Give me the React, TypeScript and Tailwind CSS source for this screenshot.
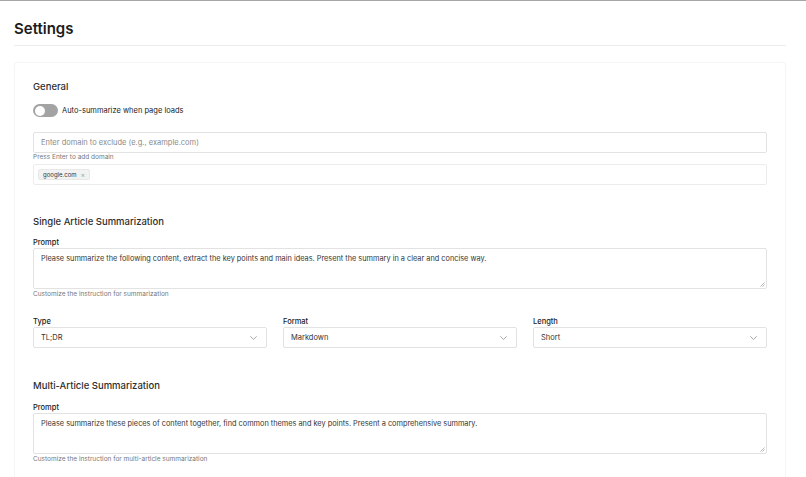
import React from "react";

function Chevron() {
  return (
    <svg width="7" height="4" viewBox="0 0 7 4" fill="none" className="shrink-0">
      <path d="M0.6 0.6 L3.5 3.4 L6.4 0.6" stroke="#8f8f8f" strokeWidth="0.8" strokeLinecap="round" strokeLinejoin="round" />
    </svg>
  );
}

function Select({ label, value }: { label: string; value: string }) {
  return (
    <div className="flex flex-col">
      <div className="h-[10px] text-[7.5px] leading-[10px] text-[#222] font-medium">{label}</div>
      <div className="h-[21px] border border-[#e2e2e2] rounded-[2px] bg-white flex items-center justify-between pl-[7px] pr-[9px]">
        <span className="text-[7.5px] text-[#333]">{value}</span>
        <Chevron />
      </div>
    </div>
  );
}

function Resize() {
  return (
    <svg width="5" height="5" viewBox="0 0 5 5" className="absolute right-[1px] bottom-[1px]">
      <path d="M4.5 0.5 L0.5 4.5 M4.5 2.5 L2.5 4.5" stroke="#9a9a9a" strokeWidth="0.7" />
    </svg>
  );
}

function Textarea({ text }: { text: string }) {
  return (
    <div className="relative h-[41px] border border-[#e2e2e2] rounded-[2px] bg-white pl-[7px] pr-[7px] pt-[5px]">
      <div className="text-[7.35px] leading-[10px] text-[#333]">{text}</div>
      <Resize />
    </div>
  );
}

export default function App() {
  return (
    <div
      className="w-[806px] h-[477px] overflow-hidden bg-white border-t border-[#a6a6a6]"
      style={{ fontFamily: 'Inter, "Liberation Sans", Arial, sans-serif' }}
    >
      <div className="pl-[14px] pr-[20px]">
        <div className="pt-[19px] pb-[7px] border-b border-[#ececec]">
          <h1 className="text-[15px] leading-[18px] font-semibold text-[#1c1c1c]">Settings</h1>
        </div>

        <div className="mt-[16px] border border-[#f5f5f5] rounded-[3px] px-[18px] pt-[17px] pb-[20px]">
          {/* General */}
          <h2 className="text-[9.5px] leading-[14px] font-medium text-[#2e2e2e]">General</h2>
          <div className="mt-[10px] flex items-center gap-[4px] h-[13px]">
            <div className="w-[25px] h-[13px] rounded-full bg-[#a3a3a3] flex items-center pl-[1.5px]">
              <div className="w-[10px] h-[10px] rounded-full bg-white" />
            </div>
            <span className="text-[7.5px] text-[#222]">Auto-summarize when page loads</span>
          </div>
          <div className="mt-[15px] h-[21px] border border-[#e2e2e2] rounded-[2px] bg-white flex items-center pl-[7px]">
            <span className="text-[7.5px] text-[#8a8a8a]">Enter domain to exclude (e.g., example.com)</span>
          </div>
          <div className="text-[6.5px] leading-[9px] text-[#777]">Press Enter to add domain</div>
          <div className="mt-[2px] h-[21px] border border-[#ececec] rounded-[2px] bg-white flex items-center pl-[4px]">
            <div className="h-[11px] flex items-center gap-[4px] bg-[#f2f2f2] border border-[#e8e8e8] rounded-[2px] px-[4px]">
              <span className="text-[6px] text-[#333]">google.com</span>
              <span className="text-[7px] leading-none text-[#9aa]">×</span>
            </div>
          </div>

          {/* Single */}
          <h2 className="mt-[30px] text-[9.5px] leading-[14px] font-medium text-[#2e2e2e]">Single Article Summarization</h2>
          <div className="mt-[9px] h-[10px] text-[7.5px] leading-[10px] font-medium text-[#222]">Prompt</div>
          <Textarea text="Please summarize the following content, extract the key points and main ideas. Present the summary in a clear and concise way." />
          <div className="mt-[1px] text-[6.5px] leading-[8px] text-[#777]">Customize the instruction for summarization</div>

          <div className="mt-[19px] grid grid-cols-3 gap-x-[16px]">
            <Select label="Type" value="TL;DR" />
            <Select label="Format" value="Markdown" />
            <Select label="Length" value="Short" />
          </div>

          {/* Multi */}
          <h2 className="mt-[31px] text-[9.5px] leading-[14px] font-medium text-[#2e2e2e]">Multi-Article Summarization</h2>
          <div className="mt-[10px] h-[10px] text-[7.5px] leading-[10px] font-medium text-[#222]">Prompt</div>
          <Textarea text="Please summarize these pieces of content together, find common themes and key points. Present a comprehensive summary." />
          <div className="mt-[1px] text-[6.5px] leading-[8px] text-[#777]">Customize the instruction for multi-article summarization</div>
        </div>
      </div>
    </div>
  );
}
